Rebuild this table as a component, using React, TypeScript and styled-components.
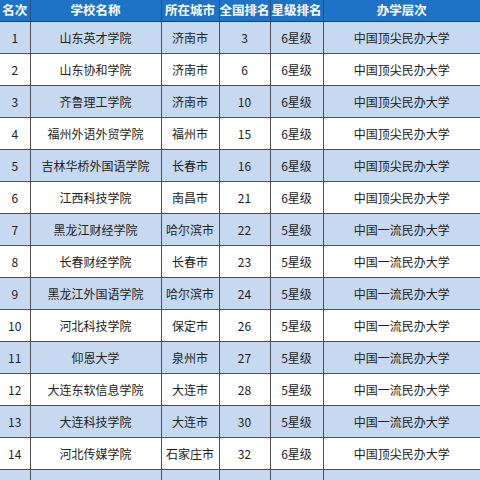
import styled, { createGlobalStyle } from 'styled-components';

const GlobalStyle = createGlobalStyle`
  html, body {
    margin: 0;
    padding: 0;
    background: #fff;
    overflow: hidden;
  }
  body {
    font-family: "Noto Sans CJK SC", "Noto Sans", sans-serif;
  }
`;

interface School {
  rank: number;
  name: string;
  city: string;
  national: number;
  star: string;
  level: string;
}

const TOP = '中国顶尖民办大学';
const FIRST = '中国一流民办大学';

const schools: School[] = [
  { rank: 1, name: '山东英才学院', city: '济南市', national: 3, star: '6星级', level: TOP },
  { rank: 2, name: '山东协和学院', city: '济南市', national: 6, star: '6星级', level: TOP },
  { rank: 3, name: '齐鲁理工学院', city: '济南市', national: 10, star: '6星级', level: TOP },
  { rank: 4, name: '福州外语外贸学院', city: '福州市', national: 15, star: '6星级', level: TOP },
  { rank: 5, name: '吉林华桥外国语学院', city: '长春市', national: 16, star: '6星级', level: TOP },
  { rank: 6, name: '江西科技学院', city: '南昌市', national: 21, star: '6星级', level: TOP },
  { rank: 7, name: '黑龙江财经学院', city: '哈尔滨市', national: 22, star: '5星级', level: FIRST },
  { rank: 8, name: '长春财经学院', city: '长春市', national: 23, star: '5星级', level: FIRST },
  { rank: 9, name: '黑龙江外国语学院', city: '哈尔滨市', national: 24, star: '5星级', level: FIRST },
  { rank: 10, name: '河北科技学院', city: '保定市', national: 26, star: '5星级', level: FIRST },
  { rank: 11, name: '仰恩大学', city: '泉州市', national: 27, star: '5星级', level: FIRST },
  { rank: 12, name: '大连东软信息学院', city: '大连市', national: 28, star: '5星级', level: FIRST },
  { rank: 13, name: '大连科技学院', city: '大连市', national: 30, star: '5星级', level: FIRST },
  { rank: 14, name: '河北传媒学院', city: '石家庄市', national: 32, star: '6星级', level: TOP },
  { rank: 15, name: '安徽新华学院', city: '合肥市', national: 33, star: '5星级', level: FIRST },
  { rank: 16, name: '西安外事学院', city: '西安市', national: 35, star: '5星级', level: FIRST },
];

const columns = [
  { title: '名次', width: 30 },
  { title: '学校名称', width: 131 },
  { title: '所在城市', width: 58 },
  { title: '全国排名', width: 51 },
  { title: '星级排名', width: 53 },
  { title: '办学层次', width: 157 },
];

const Frame = styled.div`
  width: 480px;
  height: 480px;
  overflow: hidden;
`;

const Table = styled.table`
  width: 480px;
  table-layout: fixed;
  border-collapse: collapse;
  border-spacing: 0;
`;

const HeadRow = styled.tr`
  height: 21px;
  background: #1f73c7;
`;

const HeadCell = styled.th`
  padding: 0;
  color: #fff;
  font-size: 12.5px;
  font-weight: 700;
  line-height: 20px;
  text-align: center;
  white-space: nowrap;
  border-left: 1px solid #2a4f7a;
  border-bottom: 1px solid #3a3a3a;

  &:first-child {
    border-left: none;
  }
`;

const BodyRow = styled.tr<{ $shaded: boolean }>`
  height: 32px;
  background: ${({ $shaded }) => ($shaded ? '#c6d9f0' : '#ffffff')};
`;

const Cell = styled.td`
  padding: 0;
  color: #222;
  font-size: 12px;
  line-height: 31px;
  text-align: center;
  white-space: nowrap;
  overflow: hidden;
  border-left: 1px solid #505050;
  border-bottom: 1px solid #505050;

  &:first-child {
    border-left: none;
  }
`;

export default function App() {
  return (
    <Frame>
      <GlobalStyle />
      <Table>
        <colgroup>
          {columns.map((c) => (
            <col key={c.title} style={{ width: c.width }} />
          ))}
        </colgroup>
        <thead>
          <HeadRow>
            {columns.map((c) => (
              <HeadCell key={c.title}>{c.title}</HeadCell>
            ))}
          </HeadRow>
        </thead>
        <tbody>
          {schools.map((s) => (
            <BodyRow key={s.rank} $shaded={s.rank % 2 === 1}>
              <Cell>{s.rank}</Cell>
              <Cell>{s.name}</Cell>
              <Cell>{s.city}</Cell>
              <Cell>{s.national}</Cell>
              <Cell>{s.star}</Cell>
              <Cell>{s.level}</Cell>
            </BodyRow>
          ))}
        </tbody>
      </Table>
    </Frame>
  );
}
